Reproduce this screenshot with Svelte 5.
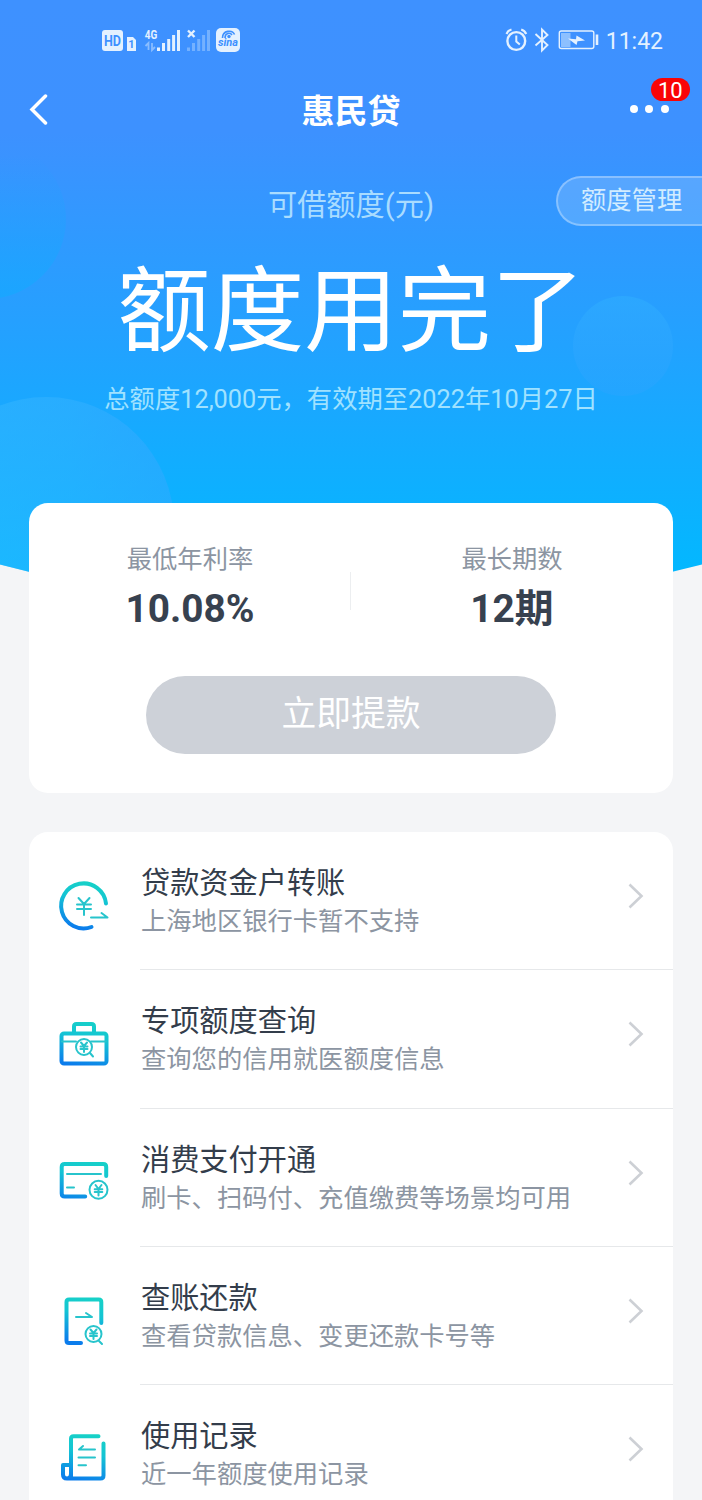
<script>
  const rows = [
    { icon: "transfer", title: "贷款资金户转账", desc: "上海地区银行卡暂不支持" },
    { icon: "case", title: "专项额度查询", desc: "查询您的信用就医额度信息" },
    { icon: "card", title: "消费支付开通", desc: "刷卡、扫码付、充值缴费等场景均可用" },
    { icon: "bill", title: "查账还款", desc: "查看贷款信息、变更还款卡号等" },
    { icon: "record", title: "使用记录", desc: "近一年额度使用记录" }
  ];
</script>

<div class="page">
  <svg class="backdrop" viewBox="0 0 702 620" width="702" height="620">
    <defs>
      <linearGradient id="sky" gradientUnits="userSpaceOnUse" x1="0" y1="0" x2="0" y2="575">
        <stop offset="0" stop-color="#3e91ff" />
        <stop offset="0.23" stop-color="#3d91ff" />
        <stop offset="0.6" stop-color="#22a2ff" />
        <stop offset="1" stop-color="#02b8ff" />
      </linearGradient>
      <linearGradient id="bubbleA" x1="0" y1="0" x2="0" y2="1">
        <stop offset="0.1" stop-color="#12a8ff" stop-opacity="0" />
        <stop offset="1" stop-color="#10acff" stop-opacity="0.55" />
      </linearGradient>
      <linearGradient id="bubbleB" x1="0" y1="0.5" x2="1" y2="0.5">
        <stop offset="0.1" stop-color="#3cbcff" stop-opacity="0.42" />
        <stop offset="0.6" stop-color="#3cb4ff" stop-opacity="0.42" />
        <stop offset="1" stop-color="#46a6ff" stop-opacity="0.36" />
      </linearGradient>
      <linearGradient id="bubbleC" x1="0.5" y1="0" x2="0.5" y2="1">
        <stop offset="0" stop-color="#30b0ff" stop-opacity="0.5" />
        <stop offset="1" stop-color="#38a2ff" stop-opacity="0.25" />
      </linearGradient>
      <clipPath id="curve"><path d="M0 0H702V564.5Q351 657 0 564.5Z" /></clipPath>
    </defs>
    <g clip-path="url(#curve)">
      <rect width="702" height="620" fill="url(#sky)" />
      <circle cx="-14" cy="219" r="80" fill="url(#bubbleA)" />
      <circle cx="46" cy="525" r="128" fill="url(#bubbleB)" />
      <circle cx="623" cy="346" r="50" fill="url(#bubbleC)" />
    </g>
  </svg>

  <div class="status">
    <svg class="signals" width="142" height="30" viewBox="100 25 142 30">
      <rect x="102" y="30" width="21" height="21" rx="3" fill="#e4f1ff" />
      <text x="112.5" y="45.5" text-anchor="middle" font-size="14" font-weight="700" textLength="17" lengthAdjust="spacingAndGlyphs" fill="#3e91ff">HD</text>
      <path d="M127 37h6l3 3v11h-9z" fill="#e4f1ff" />
      <text x="131.3" y="48" text-anchor="middle" font-size="11" font-weight="700" fill="#3e91ff">1</text>
      <text x="144.8" y="39" font-size="12.5" font-weight="700" textLength="12.5" lengthAdjust="spacingAndGlyphs" fill="#e4f1ff">4G</text>
      <path d="M148.5 50v-7l-3 3M152 43v7l3-3" fill="none" stroke="#8abdff" stroke-width="1.8" />
      <path d="M158.5 51v-3.5M163.5 51v-8M168.7 51v-12M173.6 51v-16M178.5 51v-21" fill="none" stroke="#e4f1ff" stroke-width="3" />
      <path d="M188 30.5l6.5 6.5M194.5 30.5l-6.5 6.5" stroke="#e4f1ff" stroke-width="2.4" />
      <path d="M188.5 51v-3.5M193.5 51v-8M198.7 51v-12M203.6 51v-16M208.5 51v-21" fill="none" stroke="#74b1ff" stroke-width="3" />
      <rect x="216" y="28" width="24" height="24" rx="5" fill="#e4f1ff" />
      <path d="M222.5 38c0-8 10-8.5 12-3.500M225 38c0-5 5-6 7-3" fill="none" stroke="#3e91ff" stroke-width="1.6" />
      <circle cx="229" cy="36.5" r="1.7" fill="#3e91ff" />
      <text x="228" y="46.3" text-anchor="middle" font-size="10.5" font-weight="700" font-style="italic" textLength="20" lengthAdjust="spacingAndGlyphs" fill="#3e91ff">sina</text>
    </svg>
    <div class="system">
      <svg width="96" height="30" viewBox="504 25 96 30" fill="none" stroke="#e4f1ff">
        <circle cx="516.3" cy="41" r="8.9" stroke-width="2.4" />
        <path d="M516.3 35.5v6l3.5 3" stroke-width="2" />
        <path d="M506.5 34q1.5-3.500 5-4.500M526.2 34q-1.5-3.500-5-4.500" stroke-width="2.2" />
        <path d="M535.5 34l12 11-5.500 5.500V29.500l5.500 5.500-12 10.500" stroke-width="1.9" />
        <rect x="559.3" y="31" width="34.5" height="17.500" rx="2" stroke-width="1.4" />
        <rect x="561" y="33" width="9.5" height="14" fill="#8dc0ff" stroke="none" />
        <path d="M568 38.500l8 .8.500-3.800 8.500 5-7.500.8-1 3.700z" fill="#e4f1ff" stroke="none" />
        <path d="M597 34.500v10.500" stroke-width="2.6" />
      </svg>
      <span class="clock">11:42</span>
    </div>
  </div>

  <header class="nav">
    <svg class="back" width="20" height="32" viewBox="0 0 20 32">
      <path d="M16.5 3L3 16.5L16.5 30" fill="none" stroke="#fff" stroke-width="3.5" stroke-linecap="round" />
    </svg>
    <h1>惠民贷</h1>
    <div class="more">
      <i></i><i></i><i></i>
      <span class="badge">10</span>
    </div>
  </header>

  <section class="hero">
    <div class="label">可借额度(元)</div>
    <div class="manage">额度管理</div>
    <div class="amount">额度用完了</div>
    <div class="total">总额度12,000元，有效期至2022年10月27日</div>
  </section>

  <section class="card summary">
    <div class="stats">
      <div class="stat">
        <span>最低年利率</span>
        <strong>10.08%</strong>
      </div>
      <div class="stat">
        <span>最长期数</span>
        <strong>12期</strong>
      </div>
    </div>
    <button class="withdraw" disabled>立即提款</button>
  </section>

  <svg class="defs" width="0" height="0">
    <defs>
      <linearGradient id="ink" gradientUnits="userSpaceOnUse" x1="38" y1="10" x2="28" y2="58">
        <stop offset="0" stop-color="#17d2c6" />
        <stop offset="0.4" stop-color="#14c4d4" />
        <stop offset="1" stop-color="#0b7cec" />
      </linearGradient>
    </defs>
  </svg>

  <section class="card list">
    {#each rows as row}
      <div class="row">
        <svg class="icon" width="70" height="70" viewBox="0 0 70 70">
          {#if row.icon === "transfer"}
            <path class="thick" d="M56 33.5A22.500 22.500 0 1 0 41.5 57" />
            <path class="thin" d="M28.5 28l5.5 6 5.5-6M27 34.5h14M27 39h14M34 34v11M41 47.500h16.500l-6-4.500" />
          {:else if row.icon === "case"}
            <rect class="thick" x="11.500" y="25.500" width="45" height="30" rx="2.5" />
            <path class="thick" d="M24 24.500v-6q0-2.500 2.500-2.500h15q2.500 0 2.500 2.500v6" />
            <path class="thin" d="M12 33.500h14M41 33.500h15M40 45l3 3.500" />
            <circle class="thin" cx="34" cy="39" r="8" />
            <path class="thin" d="M31 34.5l3 3.500 3-3.500M30.500 38.500h7M30.500 41h7M34 38v6" />
          {:else if row.icon === "card"}
            <path class="thick" d="M56.2 29v-9q0-3-3-3h-38.500q-3 0-3 3v26.500q0 3 3 3h20.500" />
            <path class="thin" d="M17 27h34M17 40.600h7" />
            <circle class="thin" cx="48.500" cy="42.800" r="9" />
            <path class="thin" d="M45.500 38l3 4 3-4M44.700 42.300h7.600M44.700 45h7.600M48.500 41.500v7" />
          {:else if row.icon === "bill"}
            <path class="thick" d="M51.3 38V17q0-2.500-2.500-2.500H19q-2.500 0-2.500 2.500v38.500q0 2.500 2.500 2.500h12" />
            <path class="thin" d="M26 32h16l-6-4M49 56l3 3" />
            <circle class="thin" cx="43.500" cy="49" r="8" />
            <path class="thin" d="M40.500 44.500l3 3.500 3-3.500M40 48.500h7M40 51h7M43.500 47.500v6.500" />
          {:else}
            <path class="thick" d="M48.500 13.300H23.500q-2.500 0-2.500 2.500v39M53.500 20.500v32q0 3-3 3H17q-4 0-4-4v-9.500h8v9q0 4-3.500 4.500" />
            <path class="thin" d="M33 23l-4 3.600h16M28.500 34.600h16.500M28.500 42.200h7.500" />
          {/if}
        </svg>
        <div class="text">
          <h2>{row.title}</h2>
          <p>{row.desc}</p>
        </div>
        <svg class="arrow" width="18" height="28" viewBox="0 0 18 28">
          <path d="M2.5 2.5L14.5 14L2.5 25.5" />
        </svg>
      </div>
    {/each}
  </section>
</div>

<style>
  :global(body) {
    background: #f4f5f7;
  }
  .page {
    position: relative;
    width: 702px;
    height: 1500px;
    overflow: hidden;
    background: #f4f5f7;
    font-family: Roboto, "Noto Sans CJK SC", sans-serif;
  }
  .backdrop {
    position: absolute;
    top: 0;
    left: 0;
  }
  .defs {
    position: absolute;
  }
  .status {
    position: relative;
    display: flex;
    justify-content: space-between;
    height: 55px;
    padding: 25px 39px 0 100px;
    box-sizing: border-box;
  }
  .system {
    display: flex;
    gap: 6px;
  }
  .clock {
    color: #e4f1ff;
    font-size: 23px;
    line-height: 33px;
  }
  .nav {
    position: relative;
    display: grid;
    grid-template-columns: 1fr auto 1fr;
    align-items: center;
    height: 110px;
    margin-top: -1px;
    padding: 0 33px 0 29px;
    box-sizing: border-box;
  }
  h1 {
    margin: 0;
    padding: 5px 0 0 4px;
    color: #fff;
    font-size: 33px;
    line-height: 48px;
    font-weight: 700;
  }
  .more {
    position: relative;
    display: flex;
    justify-self: end;
    gap: 7.6px;
  }
  .more i {
    width: 8px;
    height: 8px;
    border-radius: 50%;
    background: #fff;
  }
  .badge {
    position: absolute;
    left: 21px;
    bottom: 12px;
    width: 39px;
    height: 23px;
    border-radius: 12px;
    background: #f90406;
    color: #fff;
    font-size: 22px;
    line-height: 25px;
    text-align: center;
  }
  .hero {
    position: relative;
    height: 339px;
    text-align: center;
    color: #a9dcff;
  }
  .label {
    padding-top: 19px;
    font-size: 29.2px;
    line-height: 44px;
  }
  .manage {
    position: absolute;
    top: 12px;
    right: -4px;
    width: 150px;
    height: 50px;
    padding-left: 23px;
    border: 2px solid rgba(255, 255, 255, 0.3);
    border-radius: 25px 0 0 25px;
    background: rgba(255, 255, 255, 0.16);
    box-sizing: border-box;
    color: #d2ecff;
    font-size: 25.3px;
    line-height: 46px;
    text-align: left;
  }
  .amount {
    margin-top: 15px;
    color: #fff;
    font-size: 93.5px;
    line-height: 140px;
  }
  .total {
    margin-top: -1px;
    color: #a0e2ff;
    font-size: 25.3px;
    line-height: 38px;
  }
  .card {
    position: relative;
    margin: 0 29px;
    border-radius: 19px;
    background: #fff;
  }
  .summary {
    height: 290px;
  }
  .stats {
    position: relative;
    display: flex;
    padding-top: 38px;
  }
  .stats::after {
    content: "";
    position: absolute;
    left: 321px;
    top: 69px;
    width: 1px;
    height: 38px;
    background: #eceef0;
  }
  .stat {
    flex: 1;
    display: flex;
    flex-direction: column;
    align-items: center;
  }
  .stat span {
    color: #8c95a2;
    font-size: 25.3px;
    line-height: 38px;
  }
  .stat strong {
    color: #37414f;
    font-size: 38.8px;
    line-height: 60px;
  }
  .withdraw {
    display: block;
    width: 410px;
    height: 78px;
    margin: 37px auto 0;
    padding: 0 0 8px;
    border: 0;
    border-radius: 39px;
    background: #cdd1d8;
    color: #fff;
    font-family: inherit;
    font-size: 34.8px;
  }
  .list {
    margin-top: 39px;
  }
  .row {
    position: relative;
    display: flex;
    height: 138.3px;
  }
  .row + .row::before {
    content: "";
    position: absolute;
    top: -1px;
    left: 111px;
    right: 0;
    height: 1px;
    background: #e6e8ea;
  }
  .icon {
    margin: 38px 0 0 21px;
    fill: none;
    stroke: url(#ink);
    stroke-linecap: round;
    stroke-linejoin: round;
  }
  .thick {
    stroke-width: 4;
  }
  .thin {
    stroke-width: 2;
    stroke: #27c4cc;
  }
  .text {
    flex: 1;
    margin-left: 21px;
    padding-top: 30px;
  }
  h2 {
    margin: 0;
    color: #333d4b;
    font-size: 29.2px;
    font-weight: 400;
    line-height: 42px;
  }
  p {
    margin: 0;
    color: #8c95a2;
    font-size: 25.3px;
    line-height: 36px;
  }
  .arrow {
    margin: 50px 28px 0 0;
    fill: none;
    stroke: #cdd0d5;
    stroke-width: 2.6;
  }
</style>
